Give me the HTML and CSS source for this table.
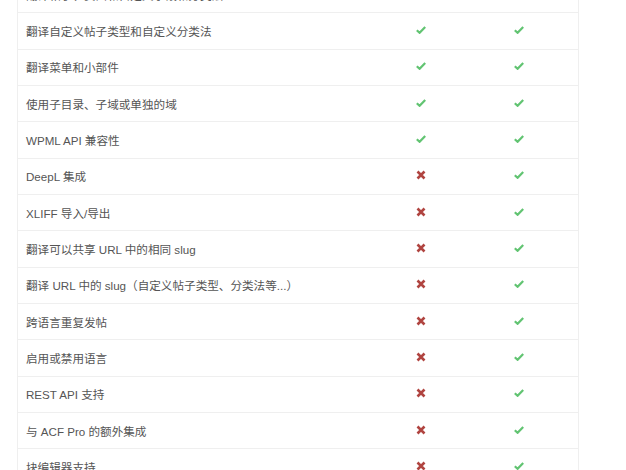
FILE: index.html
```html
<!DOCTYPE html>
<html lang="zh-CN">
<head>
  <meta charset="UTF-8" />
  <title>功能比较</title>
  <link rel="stylesheet" href="styles.css">
</head>
<body>
  <div class="wrap">
    <table class="compare">
      <tr><td>翻译帖子、页面和自定义字段和分类法</td><td class="ic"><span class="yes"></span></td><td class="ic"><span class="yes"></span></td></tr>
      <tr><td>翻译自定义帖子类型和自定义分类法</td><td class="ic"><span class="yes"></span></td><td class="ic"><span class="yes"></span></td></tr>
      <tr><td>翻译菜单和小部件</td><td class="ic"><span class="yes"></span></td><td class="ic"><span class="yes"></span></td></tr>
      <tr><td>使用子目录、子域或单独的域</td><td class="ic"><span class="yes"></span></td><td class="ic"><span class="yes"></span></td></tr>
      <tr><td>WPML API 兼容性</td><td class="ic"><span class="yes"></span></td><td class="ic"><span class="yes"></span></td></tr>
      <tr><td>DeepL 集成</td><td class="ic"><span class="no"></span></td><td class="ic"><span class="yes"></span></td></tr>
      <tr><td>XLIFF 导入/导出</td><td class="ic"><span class="no"></span></td><td class="ic"><span class="yes"></span></td></tr>
      <tr><td>翻译可以共享 URL 中的相同 slug</td><td class="ic"><span class="no"></span></td><td class="ic"><span class="yes"></span></td></tr>
      <tr><td>翻译 URL 中的 slug（自定义帖子类型、分类法等...）</td><td class="ic"><span class="no"></span></td><td class="ic"><span class="yes"></span></td></tr>
      <tr><td>跨语言重复发帖</td><td class="ic"><span class="no"></span></td><td class="ic"><span class="yes"></span></td></tr>
      <tr><td>启用或禁用语言</td><td class="ic"><span class="no"></span></td><td class="ic"><span class="yes"></span></td></tr>
      <tr><td>REST API 支持</td><td class="ic"><span class="no"></span></td><td class="ic"><span class="yes"></span></td></tr>
      <tr><td>与 ACF Pro 的额外集成</td><td class="ic"><span class="no"></span></td><td class="ic"><span class="yes"></span></td></tr>
      <tr><td>块编辑器支持</td><td class="ic"><span class="no"></span></td><td class="ic"><span class="yes"></span></td></tr>
    </table>
  </div>

  <script>
    // fill icon placeholders
    const check = '<svg viewBox="0 0 10 8" width="10" height="8"><path d="M0.8 4.2 L3.6 6.8 L9.2 1" fill="none" stroke="#62c472" stroke-width="2.2"/></svg>';
    const cross = '<svg viewBox="0 0 10 10" width="10" height="10"><path d="M1.5 1.5 L8.5 8.5 M8.5 1.5 L1.5 8.5" fill="none" stroke="#b04440" stroke-width="2.6"/></svg>';
    document.querySelectorAll('.yes').forEach(el => el.innerHTML = check);
    document.querySelectorAll('.no').forEach(el => el.innerHTML = cross);
  </script>
</body>
</html>
```

FILE: styles.css
```css
body {
  margin: 0;
  background: #fff;
  font-family: "Liberation Sans", "Noto Sans CJK SC", sans-serif;
  overflow: hidden;
}
.wrap {
  padding-left: 17px;
}
.compare {
  width: 562px;
  margin-top: -24px;
  border-collapse: collapse;
  border-left: 1px solid #efefef;
  border-right: 1px solid #efefef;
}
.compare td {
  height: 36.33px;
  box-sizing: border-box;
  padding: 0 0 0 8px;
  border-top: 1px solid #efefef;
  font-size: 11.6px;
  color: #555;
  vertical-align: middle;
}
.compare td:first-child {
  width: 348px;
}
.compare td.ic {
  width: 97px;
  padding: 0 0 2px 45px;
  line-height: 0;
}
.compare td.ic:last-child {
  width: 108px;
  padding-left: 45px;
}
.yes svg, .no svg {
  display: block;
}
```
